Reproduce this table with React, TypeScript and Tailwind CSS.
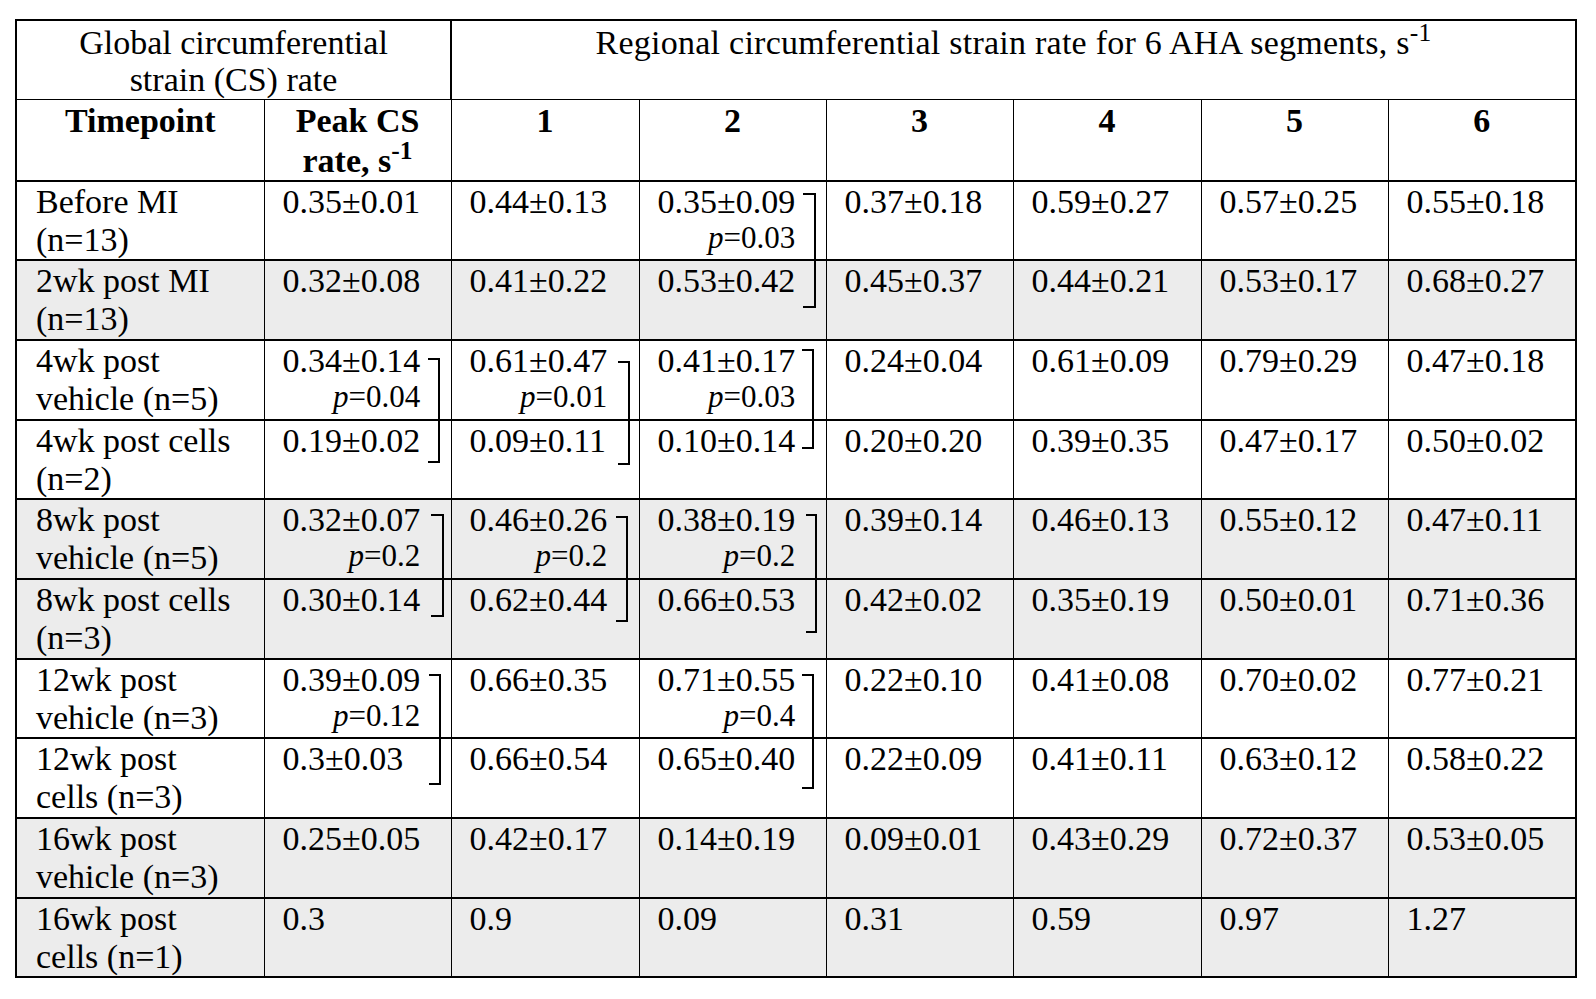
import React from "react";

type Cell = string | { v: string; p: string };

const rows: { label: [string, string]; gray: boolean; cells: Cell[] }[] = [
  {
    label: ["Before MI", "(n=13)"],
    gray: false,
    cells: ["0.35±0.01", "0.44±0.13", { v: "0.35±0.09", p: "0.03" }, "0.37±0.18", "0.59±0.27", "0.57±0.25", "0.55±0.18"],
  },
  {
    label: ["2wk post MI", "(n=13)"],
    gray: true,
    cells: ["0.32±0.08", "0.41±0.22", "0.53±0.42", "0.45±0.37", "0.44±0.21", "0.53±0.17", "0.68±0.27"],
  },
  {
    label: ["4wk post", "vehicle (n=5)"],
    gray: false,
    cells: [
      { v: "0.34±0.14", p: "0.04" },
      { v: "0.61±0.47", p: "0.01" },
      { v: "0.41±0.17", p: "0.03" },
      "0.24±0.04",
      "0.61±0.09",
      "0.79±0.29",
      "0.47±0.18",
    ],
  },
  {
    label: ["4wk post cells", "(n=2)"],
    gray: false,
    cells: ["0.19±0.02", "0.09±0.11", "0.10±0.14", "0.20±0.20", "0.39±0.35", "0.47±0.17", "0.50±0.02"],
  },
  {
    label: ["8wk post", "vehicle (n=5)"],
    gray: true,
    cells: [
      { v: "0.32±0.07", p: "0.2" },
      { v: "0.46±0.26", p: "0.2" },
      { v: "0.38±0.19", p: "0.2" },
      "0.39±0.14",
      "0.46±0.13",
      "0.55±0.12",
      "0.47±0.11",
    ],
  },
  {
    label: ["8wk post cells", "(n=3)"],
    gray: true,
    cells: ["0.30±0.14", "0.62±0.44", "0.66±0.53", "0.42±0.02", "0.35±0.19", "0.50±0.01", "0.71±0.36"],
  },
  {
    label: ["12wk post", "vehicle (n=3)"],
    gray: false,
    cells: [
      { v: "0.39±0.09", p: "0.12" },
      "0.66±0.35",
      { v: "0.71±0.55", p: "0.4" },
      "0.22±0.10",
      "0.41±0.08",
      "0.70±0.02",
      "0.77±0.21",
    ],
  },
  {
    label: ["12wk post", "cells (n=3)"],
    gray: false,
    cells: ["0.3±0.03", "0.66±0.54", "0.65±0.40", "0.22±0.09", "0.41±0.11", "0.63±0.12", "0.58±0.22"],
  },
  {
    label: ["16wk post", "vehicle (n=3)"],
    gray: true,
    cells: ["0.25±0.05", "0.42±0.17", "0.14±0.19", "0.09±0.01", "0.43±0.29", "0.72±0.37", "0.53±0.05"],
  },
  {
    label: ["16wk post", "cells (n=1)"],
    gray: true,
    cells: ["0.3", "0.9", "0.09", "0.31", "0.59", "0.97", "1.27"],
  },
];

const ValueCell = ({ cell }: { cell: Cell }) => {
  if (typeof cell === "string") {
    return <div className="leading-[38px]">{cell}</div>;
  }
  return (
    <div className="flex flex-col w-fit">
      <div className="leading-[38px]">{cell.v}</div>
      <div className="self-end text-[31px] leading-[33px]">
        <i>p</i>={cell.p}
      </div>
    </div>
  );
};

const App = () => {
  return (
    <div className="relative w-[1596px] h-[999px] bg-white text-black font-['Liberation_Serif',serif] text-[34px]">
      <div className="pl-[15px] pt-[19px]">
        <table className="table-fixed border-collapse w-[1560px]">
          <colgroup>
            <col className="w-[248px]" />
            <col className="w-[187px]" />
            <col className="w-[188px]" />
            <col className="w-[187px]" />
            <col className="w-[187px]" />
            <col className="w-[188px]" />
            <col className="w-[187px]" />
            <col className="w-[188px]" />
          </colgroup>
          <thead>
            <tr>
              <th colSpan={2} className="p-0 align-top font-normal border-t-2 border-b border-x-2 border-black">
                <div className="h-[78px] pt-[3px] leading-[37px] text-center">
                  Global circumferential
                  <br />
                  strain (CS) rate
                </div>
              </th>
              <th colSpan={6} className="p-0 align-top font-normal border-t-2 border-b border-x-2 border-black">
                <div className="h-[78px] pt-[3px] leading-[37px] text-center tracking-[0.25px]">
                  Regional circumferential strain rate for 6 AHA segments, s<sup>-1</sup>
                </div>
              </th>
            </tr>
            <tr>
              <th className="p-0 align-top font-bold border-t border-b-2 border-l-2 border-r border-black">
                <div className="h-[79.5px] pt-[1px] leading-[40px] text-center">Timepoint</div>
              </th>
              <th className="p-0 align-top font-bold border-t border-b-2 border-x border-black">
                <div className="h-[79.5px] pt-[1px] leading-[40px] text-center">
                  Peak CS
                  <br />
                  rate, s<sup>-1</sup>
                </div>
              </th>
              {["1", "2", "3", "4", "5", "6"].map((n, i) => (
                <th
                  key={n}
                  className={
                    i === 5
                      ? "p-0 align-top font-bold border-t border-b-2 border-l border-r-2 border-black"
                      : "p-0 align-top font-bold border-t border-b-2 border-x border-black"
                  }
                >
                  <div className="h-[79.5px] pt-[1px] leading-[40px] text-center">{n}</div>
                </th>
              ))}
            </tr>
          </thead>
          <tbody>
            {rows.map((row) => (
              <tr key={row.label.join(" ")} className={row.gray ? "bg-[#ececec]" : "bg-white"}>
                <td className="p-0 align-top border-y-2 border-l-2 border-r border-black">
                  <div className="h-[77.7px] pt-[1px] pl-[19px] leading-[38px]">
                    {row.label[0]}
                    <br />
                    {row.label[1]}
                  </div>
                </td>
                {row.cells.map((c, i) => (
                  <td
                    key={i}
                    className={
                      i === 6
                        ? "p-0 align-top border-y-2 border-l border-r-2 border-black"
                        : "p-0 align-top border-y-2 border-x border-black"
                    }
                  >
                    <div className="h-[77.7px] pt-[1px] pl-[18px]">
                      <ValueCell cell={c} />
                    </div>
                  </td>
                ))}
              </tr>
            ))}
          </tbody>
        </table>
      </div>

      {/* significance brackets */}
      <div className="absolute left-[803px] top-[193px] w-[13px] h-[115px] border-y-2 border-r-2 border-black" />
      <div className="absolute left-[428px] top-[358px] w-[12px] h-[105px] border-y-2 border-r-2 border-black" />
      <div className="absolute left-[618px] top-[361px] w-[12px] h-[104px] border-y-2 border-r-2 border-black" />
      <div className="absolute left-[802px] top-[349px] w-[12px] h-[100px] border-y-2 border-r-2 border-black" />
      <div className="absolute left-[431px] top-[514px] w-[13px] h-[103px] border-y-2 border-r-2 border-black" />
      <div className="absolute left-[616px] top-[516px] w-[12px] h-[106px] border-y-2 border-r-2 border-black" />
      <div className="absolute left-[806px] top-[514px] w-[11px] h-[119px] border-y-2 border-r-2 border-black" />
      <div className="absolute left-[429px] top-[674px] w-[12px] h-[111px] border-y-2 border-r-2 border-black" />
      <div className="absolute left-[802px] top-[674px] w-[12px] h-[115px] border-y-2 border-r-2 border-black" />
    </div>
  );
};

export default App;
